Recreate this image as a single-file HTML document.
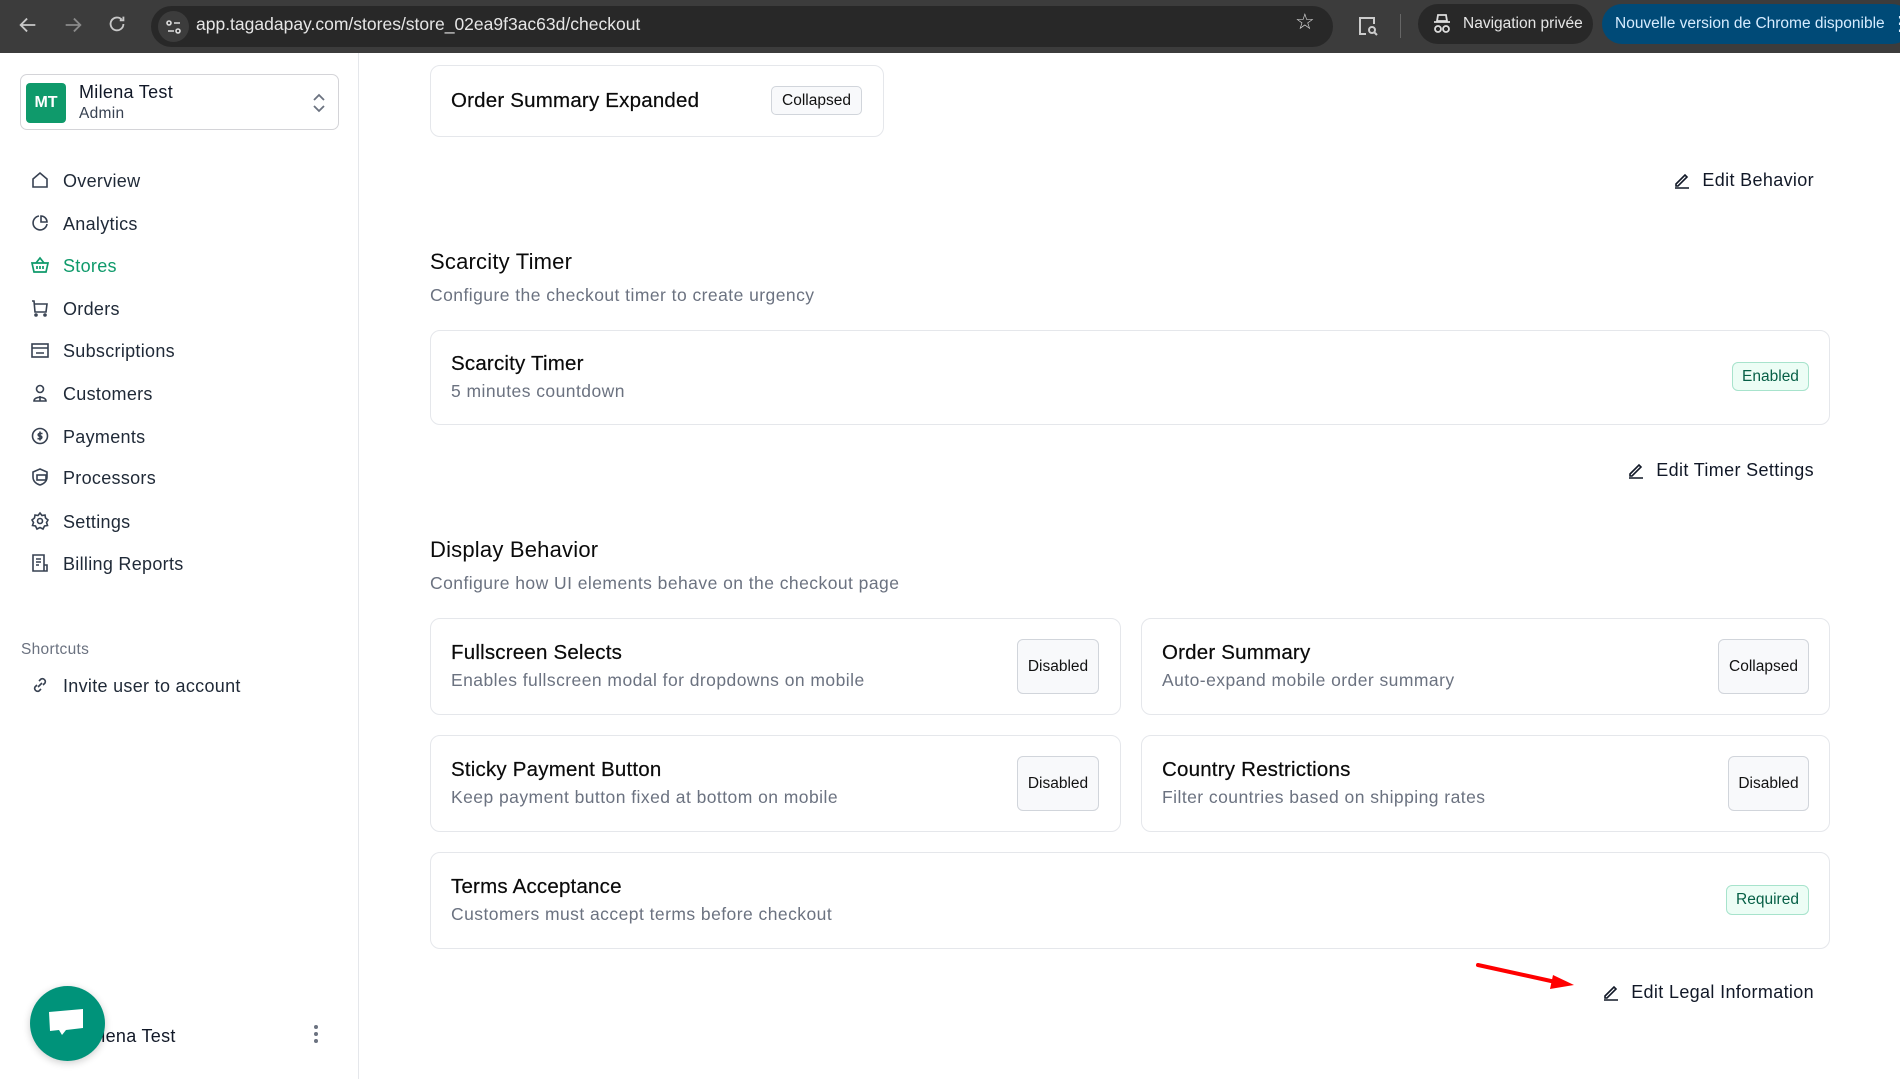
<!DOCTYPE html>
<html><head><meta charset="utf-8"><style>
*{margin:0;padding:0;box-sizing:border-box}
body{width:1900px;height:1079px;overflow:hidden;background:#fff;font-family:"Liberation Sans",Arial,sans-serif;position:relative;color:#111827}
.a{position:absolute;white-space:nowrap;line-height:1}
.top{position:absolute;left:0;top:0;width:1900px;height:53px;background:#3c3c3c}
.url{position:absolute;left:151px;top:6px;width:1182px;height:41px;border-radius:21px;background:#282828}
.side{position:absolute;left:358px;top:53px;width:1px;height:1026px;background:#e5e7eb}
.nav{position:absolute;left:63px;font-size:18px;color:#1f2937;line-height:1;letter-spacing:0.3px}
.ic{position:absolute;left:30px;width:20px;height:20px}
.card{position:absolute;border:1px solid #e5e7eb;border-radius:10px;background:#fff}
.tt{font-size:20.5px;color:#0a0a0a;letter-spacing:0.2px;-webkit-text-stroke:0.2px #0a0a0a}
.st{font-size:17.5px;color:#6b7280;letter-spacing:0.45px}
.btn{position:absolute;border:1px solid #d1d5db;border-radius:6px;background:#f8f9fb;font-size:15.5px;color:#111;display:flex;align-items:center;justify-content:center}
.badge{position:absolute;border:1px solid #a7e3cc;border-radius:6px;background:#ecfdf5;font-size:15.5px;color:#065f46;display:flex;align-items:center;justify-content:center}
.edit{position:absolute;right:86px;font-size:18px;color:#111827;line-height:1;display:flex;align-items:center;gap:10px;letter-spacing:0.35px}
</style></head><body>
<div class="top"></div>
<svg class="a" style="left:17px;top:14px" width="22" height="22" viewBox="0 0 24 24" fill="none" stroke="#c8c8c8" stroke-width="2"><path d="M20 12H5M11 5l-7 7 7 7"/></svg>
<svg class="a" style="left:62px;top:14px" width="22" height="22" viewBox="0 0 24 24" fill="none" stroke="#8a8a8a" stroke-width="2"><path d="M4 12h15M13 5l7 7-7 7"/></svg>
<svg class="a" style="left:106px;top:13px" width="22" height="22" viewBox="0 0 24 24" fill="none" stroke="#c8c8c8" stroke-width="2"><path d="M19 12a7 7 0 1 1-2-5M19 4v4h-4"/></svg>
<div class="url"></div>
<div class="a" style="left:158px;top:11px;width:31px;height:31px;border-radius:50%;background:#3c3c3c"></div>
<svg class="a" style="left:164px;top:17px" width="20" height="20" viewBox="0 0 20 20" fill="none" stroke="#ddd" stroke-width="1.6"><circle cx="5" cy="6" r="2"/><path d="M10 6h6M4 14h6"/><circle cx="14" cy="14" r="2"/></svg>
<div class="a" style="left:196px;top:16px;font-size:17.5px;color:#e6e6e6">app.tagadapay.com/stores/store_02ea9f3ac63d/checkout</div>
<div class="a" style="left:1295px;top:11px;font-size:22px;color:#ddd">☆</div>
<svg class="a" style="left:1356px;top:14px" width="24" height="24" viewBox="0 0 24 24" fill="none" stroke="#ccc" stroke-width="2"><path d="M10 20H4V4h14v6"/><circle cx="16" cy="16" r="3"/><path d="M18 18l3 3"/></svg>
<div class="a" style="left:1400px;top:14px;width:1px;height:24px;background:#666"></div>
<div class="a" style="left:1418px;top:4px;width:175px;height:40px;border-radius:20px;background:#282828"></div>
<svg class="a" style="left:1432px;top:13px" width="20" height="22" viewBox="0 0 20 22" fill="none" stroke="#ddd" stroke-width="1.8"><path d="M6 2h8l1 6H5zM2 9h16"/><circle cx="6" cy="16" r="3"/><circle cx="14" cy="16" r="3"/></svg>
<div class="a" style="left:1463px;top:16px;font-size:15.5px;color:#e6e6e6">Navigation privée</div>
<div class="a" style="left:1602px;top:4px;width:310px;height:40px;border-radius:20px;background:#004a77"></div>
<div class="a" style="left:1615px;top:16px;font-size:15.5px;color:#d6ecff">Nouvelle version de Chrome disponible</div>
<div class="a" style="left:1890px;top:14px;font-size:20px;color:#d6ecff">⋮</div>

<div class="side"></div>
<div class="a" style="left:20px;top:74px;width:319px;height:56px;border:1px solid #d4d4d8;border-radius:7px"></div>
<div class="a" style="left:26px;top:83px;width:40px;height:40px;border-radius:4px;background:#0f9a6b;color:#fff;font-weight:bold;font-size:16px;display:flex;align-items:center;justify-content:center">MT</div>
<div class="a" style="left:79px;top:83px;font-size:18px;color:#111827;letter-spacing:0.3px">Milena Test</div>
<div class="a" style="left:79px;top:106px;font-size:15.5px;color:#374151;letter-spacing:0.3px">Admin</div>
<svg class="a" style="left:311px;top:92px" width="16" height="22" viewBox="0 0 16 22" fill="none" stroke="#6b7280" stroke-width="1.8"><path d="M3 8l5-5 5 5M3 14l5 5 5-5"/></svg>

<svg class="ic" style="top:170px" viewBox="0 0 20 20" fill="none" stroke="#374151" stroke-width="1.6"><path d="M3 9l7-6 7 6v8H3z"/></svg>
<div class="nav" style="top:172px">Overview</div>
<svg class="ic" style="top:213px" viewBox="0 0 20 20" fill="none" stroke="#374151" stroke-width="1.6"><path d="M17 11a7 7 0 1 1-8-8"/><path d="M11 3a6 6 0 0 1 6 6h-6z"/></svg>
<div class="nav" style="top:215px">Analytics</div>
<svg class="ic" style="top:255px" viewBox="0 0 20 20" fill="none" stroke="#0f9a6b" stroke-width="1.7"><path d="M6 8l4-5 4 5M2 8h16l-2 9H4zM7 11v3M10 11v3M13 11v3"/></svg>
<div class="nav" style="top:257px;color:#0f9a6b">Stores</div>
<svg class="ic" style="top:298px" viewBox="0 0 20 20" fill="none" stroke="#374151" stroke-width="1.6"><path d="M2 3h2l1 11h11l1-8H5"/><circle cx="6" cy="17" r="1"/><circle cx="15" cy="17" r="1"/></svg>
<div class="nav" style="top:300px">Orders</div>
<svg class="ic" style="top:340px" viewBox="0 0 20 20" fill="none" stroke="#374151" stroke-width="1.6"><rect x="2" y="4" width="16" height="13"/><path d="M2 8h16M6 13h8"/></svg>
<div class="nav" style="top:342px">Subscriptions</div>
<svg class="ic" style="top:383px" viewBox="0 0 20 20" fill="none" stroke="#374151" stroke-width="1.6"><circle cx="10" cy="6" r="3.5"/><path d="M4 18c0-5 12-5 12 0zM10 13v5"/></svg>
<div class="nav" style="top:385px">Customers</div>
<svg class="ic" style="top:426px" viewBox="0 0 20 20" fill="none" stroke="#374151" stroke-width="1.6"><circle cx="10" cy="10" r="7.5"/><path d="M12.5 7.5h-3a1.3 1.3 0 0 0 0 2.6h1a1.3 1.3 0 0 1 0 2.6h-3M10 5.5v9"/></svg>
<div class="nav" style="top:428px">Payments</div>
<svg class="ic" style="top:467px" viewBox="0 0 20 20" fill="none" stroke="#374151" stroke-width="1.6"><path d="M10 2l7 3v5c0 4-3 7-7 8-4-1-7-4-7-8V5z"/><rect x="7" y="8" width="9" height="5"/></svg>
<div class="nav" style="top:469px">Processors</div>
<svg class="ic" style="top:511px" viewBox="0 0 20 20" fill="none" stroke="#374151" stroke-width="1.6"><circle cx="10" cy="10" r="2.5"/><path d="M10 2l2 2.5 3-.5.5 3L18 9l-1.5 2.5 1 3-3 .5-1.5 3-3-1.5-3 1.5-1.5-3-3-.5 1-3L2 9l2.5-2 .5-3 3 .5z"/></svg>
<div class="nav" style="top:513px">Settings</div>
<svg class="ic" style="top:553px" viewBox="0 0 20 20" fill="none" stroke="#374151" stroke-width="1.6"><path d="M15 18H3V2h11v16M6 6h5M6 9h5M6 12h3M14 12h3v6h-2"/></svg>
<div class="nav" style="top:555px">Billing Reports</div>
<div class="a" style="left:21px;top:642px;font-size:15.5px;color:#6b7280;letter-spacing:0.3px">Shortcuts</div>
<svg class="ic" style="top:675px" viewBox="0 0 20 20" fill="none" stroke="#374151" stroke-width="1.6"><path d="M8 12l4-4M9 6l2-2a3 3 0 0 1 4 4l-2 2M11 14l-2 2a3 3 0 0 1-4-4l2-2"/></svg>
<div class="nav" style="top:677px">Invite user to account</div>
<div class="a" style="left:97px;top:1027px;font-size:18px;color:#111827;letter-spacing:0.3px">ilena Test</div>
<div class="a" style="left:314px;top:1025px;width:4px;height:4px;border-radius:2px;background:#6b7280;box-shadow:0 7px 0 #6b7280,0 14px 0 #6b7280"></div>
<div class="a" style="left:30px;top:986px;width:75px;height:75px;border-radius:50%;background:#00937a;box-shadow:0 2px 8px rgba(0,0,0,.2)"></div>
<svg class="a" style="left:47px;top:1008px" width="40" height="34" viewBox="0 0 40 34"><path d="M2 4l34-3 0 19-17 2-4 5-3-5-9 1z" fill="#fff"/></svg>

<div class="card" style="left:430px;top:65px;width:454px;height:72px"></div>
<div class="a tt" style="left:451px;top:91px">Order Summary Expanded</div>
<div class="btn" style="left:771px;top:86px;width:91px;height:29px;border-radius:5px">Collapsed</div>

<div class="edit" style="top:170px"><svg width="20" height="20" viewBox="0 0 20 20" fill="none" stroke="#111827" stroke-width="1.6"><path d="M4 14l9-9 2 2-9 9H4zM3 18h14"/></svg>Edit Behavior</div>

<div class="a" style="left:430px;top:251px;font-size:22px;color:#0a0a0a;letter-spacing:0.2px">Scarcity Timer</div>
<div class="a st" style="left:430px;top:287px">Configure the checkout timer to create urgency</div>
<div class="card" style="left:430px;top:330px;width:1400px;height:95px"></div>
<div class="a tt" style="left:451px;top:354px">Scarcity Timer</div>
<div class="a st" style="left:451px;top:383px">5 minutes countdown</div>
<div class="badge" style="left:1732px;top:362px;width:77px;height:29px">Enabled</div>
<div class="edit" style="top:460px"><svg width="20" height="20" viewBox="0 0 20 20" fill="none" stroke="#111827" stroke-width="1.6"><path d="M4 14l9-9 2 2-9 9H4zM3 18h14"/></svg>Edit Timer Settings</div>

<div class="a" style="left:430px;top:539px;font-size:22px;color:#0a0a0a;letter-spacing:0.2px">Display Behavior</div>
<div class="a st" style="left:430px;top:575px">Configure how UI elements behave on the checkout page</div>

<div class="card" style="left:430px;top:618px;width:691px;height:97px"></div>
<div class="a tt" style="left:451px;top:643px">Fullscreen Selects</div>
<div class="a st" style="left:451px;top:672px">Enables fullscreen modal for dropdowns on mobile</div>
<div class="btn" style="left:1017px;top:639px;width:82px;height:55px">Disabled</div>

<div class="card" style="left:1141px;top:618px;width:689px;height:97px"></div>
<div class="a tt" style="left:1162px;top:643px">Order Summary</div>
<div class="a st" style="left:1162px;top:672px">Auto-expand mobile order summary</div>
<div class="btn" style="left:1718px;top:639px;width:91px;height:55px">Collapsed</div>

<div class="card" style="left:430px;top:735px;width:691px;height:97px"></div>
<div class="a tt" style="left:451px;top:760px">Sticky Payment Button</div>
<div class="a st" style="left:451px;top:789px">Keep payment button fixed at bottom on mobile</div>
<div class="btn" style="left:1017px;top:756px;width:82px;height:55px">Disabled</div>

<div class="card" style="left:1141px;top:735px;width:689px;height:97px"></div>
<div class="a tt" style="left:1162px;top:760px">Country Restrictions</div>
<div class="a st" style="left:1162px;top:789px">Filter countries based on shipping rates</div>
<div class="btn" style="left:1728px;top:756px;width:81px;height:55px">Disabled</div>

<div class="card" style="left:430px;top:852px;width:1400px;height:97px"></div>
<div class="a tt" style="left:451px;top:877px">Terms Acceptance</div>
<div class="a st" style="left:451px;top:906px">Customers must accept terms before checkout</div>
<div class="badge" style="left:1726px;top:885px;width:83px;height:30px">Required</div>

<svg class="a" style="left:1470px;top:955px" width="110" height="40" viewBox="0 0 110 40"><path d="M8 10L90 28" stroke="#f00" stroke-width="4" stroke-linecap="round"/><path d="M83 20L104 30 80 34z" fill="#f00"/></svg>
<div class="edit" style="top:982px"><svg width="20" height="20" viewBox="0 0 20 20" fill="none" stroke="#111827" stroke-width="1.6"><path d="M4 14l9-9 2 2-9 9H4zM3 18h14"/></svg>Edit Legal Information</div>
</body></html>
